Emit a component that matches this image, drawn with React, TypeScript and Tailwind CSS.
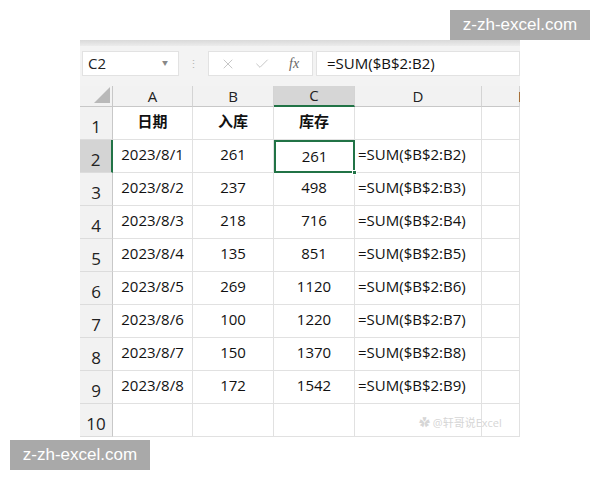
import { X, Check } from 'lucide-react';

const ROWS = [
  ['2023/8/1', '261', '261', '=SUM($B$2:B2)'],
  ['2023/8/2', '237', '498', '=SUM($B$2:B3)'],
  ['2023/8/3', '218', '716', '=SUM($B$2:B4)'],
  ['2023/8/4', '135', '851', '=SUM($B$2:B5)'],
  ['2023/8/5', '269', '1120', '=SUM($B$2:B6)'],
  ['2023/8/6', '100', '1220', '=SUM($B$2:B7)'],
  ['2023/8/7', '150', '1370', '=SUM($B$2:B8)'],
  ['2023/8/8', '172', '1542', '=SUM($B$2:B9)'],
];

const FONT = "font-['Open_Sans','Noto_Sans_CJK_SC',sans-serif]";

function RowHead({ n, active }: { n: number; active?: boolean }) {
  return (
    <div
      className={`flex items-end justify-center pb-0 text-[17px] text-[#222] border-b border-[#dcdcdc] ${
        active ? 'bg-[#d4d4d4] border-r-2 border-r-[#217346]' : 'bg-[#f2f2f2] border-r border-r-[#c8c8c8]'
      }`}
    >
      {n}
    </div>
  );
}

function Cell({ children, left, bold }: { children?: React.ReactNode; left?: boolean; bold?: boolean }) {
  return (
    <div
      className={`flex items-center pb-[3px] text-[15px] text-[#111] border-r border-b border-[#e1e1e1] ${
        left ? 'justify-start pl-[3px]' : 'justify-center'
      } ${bold ? 'font-bold' : ''}`}
    >
      {children}
    </div>
  );
}

export default function App() {
  return (
    <div className={`relative w-[600px] h-[480px] bg-white ${FONT}`}>
      <div className="absolute top-[10px] left-[450px] w-[140px] h-[30px] bg-[#a9a9a9] flex items-center justify-center text-white text-[17px] font-['Liberation_Sans',sans-serif] z-10">
        z-zh-excel.com
      </div>

      <div className="pt-[40px] pl-[80px]">
        <div className="w-[440px] overflow-hidden">
          {/* top strip */}
          <div className="h-[6px] bg-gradient-to-b from-[#d9d9d9] to-[#ececec]" />

          {/* formula bar */}
          <div className="h-[40px] bg-[#f3f3f3] flex items-start pt-[5px]">
            <div className="ml-[2px] w-[97px] h-[25px] bg-white border border-[#e2e2e2] flex items-center justify-between pl-[5px] pr-[10px]">
              <span className="text-[15px] text-[#222]">C2</span>
              <span className="text-[6px] text-[#888]">▼</span>
            </div>
            <div className="w-[29px] h-[25px] flex items-center justify-center text-[#b5b5b5] text-[11px] leading-none">
              ⋮
            </div>
            <div className="w-[105px] h-[25px] bg-white border border-[#e2e2e2] flex items-center pl-[11px]">
              <X className="w-[16px] h-[16px] text-[#b8b8b8]" strokeWidth={1.2} />
              <Check className="w-[16px] h-[16px] text-[#b8b8b8] ml-[18px]" strokeWidth={1.2} />
              <span className="ml-[19px] text-[14px] italic text-[#666] font-['Liberation_Serif',serif]">fx</span>
            </div>
            <div className="ml-[3px] flex-1 h-[25px] bg-white border border-[#e2e2e2] flex items-center pl-[10px] text-[15px] text-[#111]">
              =SUM($B$2:B2)
            </div>
          </div>

          {/* grid */}
          <div className="grid grid-cols-[33px_80px_81px_81px_127px_38px] grid-rows-[21px_repeat(10,33px)]">
            <div className="bg-[#f2f2f2] border-r border-b border-[#c8c8c8] relative">
              <div className="absolute right-[2px] bottom-[3px] w-0 h-0 border-l-[16px] border-l-transparent border-b-[16px] border-b-[#b9b9b9]" />
            </div>
            {['A', 'B', 'C', 'D', 'E'].map((c) => (
              <div
                key={c}
                className={`flex items-center justify-center text-[15px] text-[#222] border-r border-[#d4d4d4] ${
                  c === 'C' ? 'bg-[#d6d6d6] border-b-2 border-b-[#217346]' : 'bg-[#f2f2f2] border-b border-b-[#c8c8c8]'
                } ${c === 'E' ? 'justify-start pl-[36px]' : ''}`}
              >
                {c}
              </div>
            ))}

            <RowHead n={1} />
            <Cell bold>日期</Cell>
            <Cell bold>入库</Cell>
            <Cell bold>库存</Cell>
            <Cell />
            <Cell />

            {ROWS.map((r, i) => (
              <div key={i} className="contents">
                <RowHead n={i + 2} active={i === 0} />
                <Cell>{r[0]}</Cell>
                <Cell>{r[1]}</Cell>
                {i === 0 ? (
                  <div className="relative flex items-center justify-center pb-[1px] text-[15px] text-[#111] border-2 border-[#217346]">
                    {r[2]}
                    <div className="absolute -right-[4px] -bottom-[4px] w-[5px] h-[5px] bg-[#217346] border border-white" />
                  </div>
                ) : (
                  <Cell>{r[2]}</Cell>
                )}
                <Cell left>{r[3]}</Cell>
                <Cell />
              </div>
            ))}

            <RowHead n={10} />
            <Cell />
            <Cell />
            <Cell />
            <div className="relative border-r border-b border-[#e1e1e1]">
              <span className="absolute left-[64px] top-[11px] whitespace-nowrap text-[11px] text-[#d6d6d6]">
                ✿ @轩哥说Excel
              </span>
            </div>
            <Cell />
          </div>
        </div>
      </div>

      <div className="absolute top-[440px] left-[10px] w-[140px] h-[30px] bg-[#a9a9a9] flex items-center justify-center text-white text-[17px] font-['Liberation_Sans',sans-serif]">
        z-zh-excel.com
      </div>
    </div>
  );
}
